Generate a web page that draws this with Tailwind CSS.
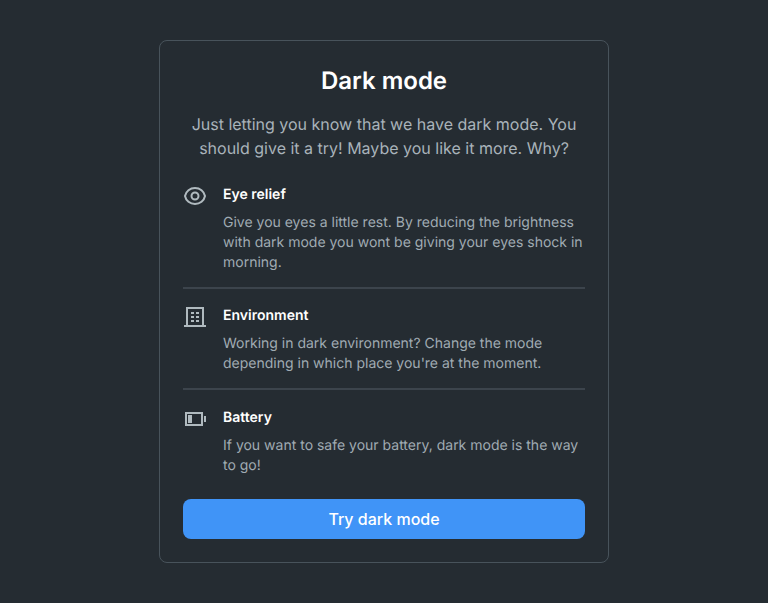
<!DOCTYPE html>
<html lang="en"><head><meta charset="utf-8"><title>Dark mode</title>
<script src="https://cdn.jsdelivr.net/npm/@tailwindcss/browser@4"></script></head>
<body class="h-[603px] overflow-hidden bg-[#252c32] pt-10 font-['Inter',sans-serif] [text-rendering:geometricPrecision]">
<main class="mx-auto h-[523px] w-[450px] rounded-lg border border-[#48535b] px-[23px] pt-6">
<h1 class="text-center text-2xl leading-8 font-semibold text-white">Dark mode</h1>
<p class="mt-[15px] text-center text-base leading-6 text-[#a9b3ba]">Just letting you know that we have dark mode. You<br>should give it a try! Maybe you like it more. Why?</p>
<section class="mt-6 flex h-[105px] gap-4 border-b-2 border-[#3c444c]">
<svg class="size-6 shrink-0 fill-none stroke-[#b0babf] stroke-2" viewBox="0 0 24 24"><path d="M2 12C2.900 7.300 7 4 12 4s9.100 3.300 10 8c-.900 4.700-5 8-10 8S2.900 16.700 2 12Z"/><circle cx="12" cy="12" r="3.500"/></svg>
<div class="pt-px"><h2 class="text-sm leading-5 font-semibold text-white">Eye relief</h2>
<p class="mt-2 text-sm leading-5 text-[#a0abb2]">Give you eyes a little rest. By reducing the brightness<br>with dark mode you wont be giving your eyes shock in<br>morning.</p></div></section>
<section class="mt-4 flex h-[85px] gap-4 border-b-2 border-[#3c444c]">
<svg class="size-6 shrink-0 fill-[#b0babf]" viewBox="0 0 24 24"><path fill-rule="evenodd" d="M3 2h18v18h2v2H1v-2h2V2Zm2 2v16h14V4H5Z"/><path d="M8 7h3v2H8zM13 7h3v2h-3zM8 11h3v2H8zM13 11h3v2h-3zM8 15h3v2H8zM13 15h3v2h-3z"/></svg>
<div class="pt-px"><h2 class="text-sm leading-5 font-semibold text-white">Environment</h2>
<p class="mt-2 text-sm leading-5 text-[#a0abb2]">Working in dark environment? Change the mode<br>depending in which place you're at the moment.</p></div></section>
<section class="mt-[17px] flex h-[68px] gap-4">
<svg class="size-6 shrink-0 fill-[#b0babf]" viewBox="0 0 24 24"><path fill-rule="evenodd" d="M2 5h18v14H2V5Zm2 2v10h14V7H4Z"/><path d="M5 8h4v8H5zM21 9h2v6h-2z"/></svg>
<div class="pt-px"><h2 class="text-sm leading-5 font-semibold text-white">Battery</h2>
<p class="mt-2 text-sm leading-5 text-[#a0abb2]">If you want to safe your battery, dark mode is the way<br>to go!</p></div></section>
<button class="mt-6 flex h-10 w-full items-center justify-center rounded-lg bg-[#4094f7] text-base leading-6 font-medium text-white">Try dark mode</button>
</main></body></html>
